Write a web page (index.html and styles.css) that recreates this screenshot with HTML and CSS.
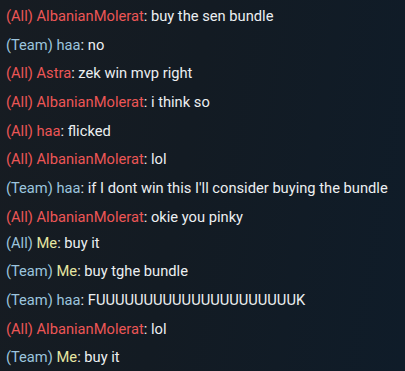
FILE: index.html
```html
<!DOCTYPE html>
<html>
<head>
<meta charset="utf-8">
<link rel="stylesheet" href="styles.css">
</head>
<body>
<div class="chat">
  <div class="msg"><span class="all">(All) AlbanianMolerat</span>: buy the sen bundle</div>
  <div class="msg"><span class="team">(Team) haa</span>: no</div>
  <div class="msg"><span class="all">(All) Astra</span>: zek win mvp right</div>
  <div class="msg"><span class="all">(All) AlbanianMolerat</span>: i think so</div>
  <div class="msg"><span class="all">(All) haa</span>: flicked</div>
  <div class="msg"><span class="all">(All) AlbanianMolerat</span>: lol</div>
  <div class="msg"><span class="team">(Team) haa</span>: if I dont win this I'll consider buying the bundle</div>
  <div class="msg"><span class="all">(All) AlbanianMolerat</span>: okie you pinky</div>
  <div class="msg tight"><span class="team">(All)</span> <span class="me">Me</span>: buy it</div>
  <div class="msg"><span class="team">(Team)</span> <span class="me">Me</span>: buy tghe bundle</div>
  <div class="msg"><span class="team">(Team) haa</span>: FUUUUUUUUUUUUUUUUUUUUUK</div>
  <div class="msg"><span class="all">(All) AlbanianMolerat</span>: lol</div>
  <div class="msg"><span class="team">(Team)</span> <span class="me">Me</span>: buy it</div>
</div>
</body>
</html>
```
FILE: styles.css
```css
html, body {
  margin: 0;
  padding: 0;
  width: 405px;
  height: 371px;
  overflow: hidden;
}
body {
  background: linear-gradient(100deg, #171c22 0%, #131b23 45%, #0f1c29 100%);
  font-family: Roboto, "Noto Sans", sans-serif;
  font-size: 14.7px;
  color: #eceff1;
}
.chat {
  padding: 2px 0 0 6px;
  display: flex;
  flex-direction: column;
}
.msg {
  height: 28.7px;
  line-height: 28.7px;
  white-space: nowrap;
}
.msg.tight {
  margin-top: -3px;
}
.all { color: #ec5656; }
.team { color: #9cc5de; }
.me { color: #e6e6a2; }
```
